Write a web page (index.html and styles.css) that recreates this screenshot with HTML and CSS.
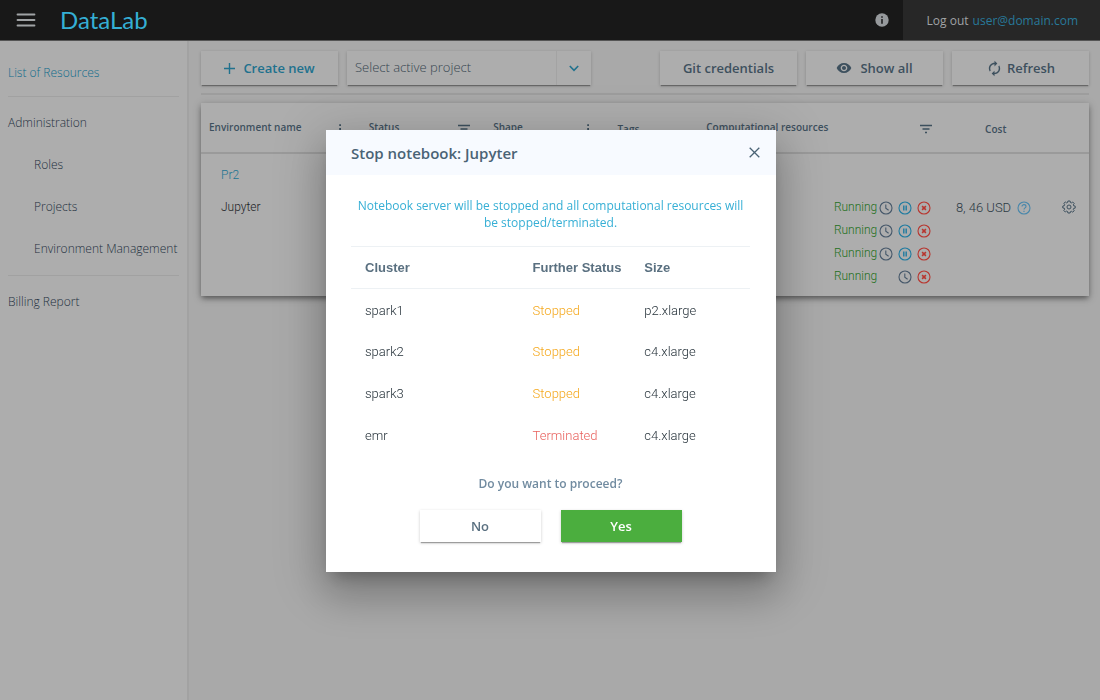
FILE: index.html
```html
<!DOCTYPE html>
<html lang="en">
<head>
<meta charset="utf-8">
<title>DataLab</title>
<link rel="stylesheet" href="styles.css">
</head>
<body>
<svg class="sprite" aria-hidden="true">
  <symbol id="filter" viewBox="0 0 14 14"><path d="M1 3.5h12M3.5 7h7M6 10.5h2" stroke="currentColor" stroke-width="1.3"/></symbol>
  <symbol id="dots" viewBox="0 0 14 14"><path d="M6.2 2.2h1.8v1.8h-1.8zM6.2 6.1h1.8v1.8h-1.8zM6.2 10h1.8v1.8h-1.8z" fill="currentColor"/></symbol>
  <symbol id="clock" viewBox="0 0 14 14"><g fill="none" stroke="currentColor" stroke-width="1.1"><circle cx="7" cy="7" r="6"/><path d="M6.8 3.4v3.9l2.8 1.9"/></g></symbol>
  <symbol id="pause" viewBox="0 0 14 14"><circle cx="7" cy="7" r="6" fill="none" stroke="currentColor" stroke-width="1.1"/><path d="M5.8 4.4v5.2M8.2 4.4v5.2" stroke="currentColor" stroke-width="1.4"/></symbol>
  <symbol id="cancel" viewBox="0 0 14 14"><circle cx="7" cy="7" r="6" fill="none" stroke="currentColor" stroke-width="1.1"/><path d="M5.1 5.1l3.8 3.8M8.9 5.1L5.1 8.9" stroke="currentColor" stroke-width="1.5"/></symbol>
</svg>

<header class="topbar">
  <button class="icon-button menu" aria-label="Menu"><svg width="20" height="14" viewBox="0 0 20 14"><path d="M1.500 1.500h17M1.500 7h17M1.500 12.500h17" stroke="currentColor" stroke-width="1.8" stroke-linecap="round"/></svg></button>
  <a class="logo" href="#">DataLab</a>
  <button class="icon-button info" aria-label="Information"><svg width="14" height="14" viewBox="0 0 14 14"><circle cx="7" cy="7" r="6.700" fill="currentColor"/><path d="M7 3.200v1.500M7 6v4.700" stroke="#181818" stroke-width="1.5"/></svg></button>
  <a class="logout" href="#">Log out <span class="user">user@domain.com</span></a>
</header>

<div class="layout">
  <nav class="sidebar">
    <a class="nav-link active" href="#">List of Resources</a>
    <div class="nav-group">
      <a class="nav-link" href="#">Administration</a>
      <a class="nav-link sub" href="#">Roles</a>
      <a class="nav-link sub" href="#">Projects</a>
      <a class="nav-link sub" href="#">Environment Management</a>
    </div>
    <a class="nav-link" href="#">Billing Report</a>
  </nav>

  <main class="content">
    <div class="toolbar">
      <button class="tool primary"><svg width="11" height="11" viewBox="0 0 11 11"><path d="M5.500 0v11M0 5.500h11" stroke="currentColor" stroke-width="1.4"/></svg>Create new</button>
      <div class="project">
        <select class="project-select" aria-label="Active project"><option>Select active project</option></select>
        <span class="project-arrow"><svg width="10" height="7" viewBox="0 0 10 7"><path d="M.8 1L5 5.300 9.200 1" fill="none" stroke="currentColor" stroke-width="1.6"/></svg></span>
      </div>
      <div class="tool-group">
        <button class="tool">Git credentials</button>
        <button class="tool"><svg width="16" height="16" viewBox="0 0 24 24"><path fill="currentColor" d="M12 4.500C7 4.500 2.730 7.610 1 12c1.730 4.390 6 7.500 11 7.500s9.270-3.110 11-7.500c-1.730-4.390-6-7.500-11-7.500zM12 17c-2.760 0-5-2.240-5-5s2.240-5 5-5 5 2.240 5 5-2.240 5-5 5zm0-8c-1.660 0-3 1.340-3 3s1.340 3 3 3 3-1.340 3-3-1.340-3-3-3z"/></svg>Show all</button>
        <button class="tool tight"><svg width="17" height="17" viewBox="0 0 24 24"><path fill="currentColor" d="M12 6v3l4-4-4-4v3c-4.420 0-8 3.580-8 8 0 1.570.46 3.030 1.240 4.260L6.700 14.800c-.45-.83-.7-1.790-.7-2.800 0-3.310 2.690-6 6-6zm6.760 1.740L17.300 9.200c.44.84.7 1.790.7 2.800 0 3.310-2.690 6-6 6v-3l-4 4 4 4v-3c4.420 0 8-3.580 8-8 0-1.570-.46-3.030-1.240-4.260z"/></svg>Refresh</button>
      </div>
    </div>

    <table class="resources">
      <colgroup><col class="c-name"><col class="c-mid"><col class="c-mid"><col class="c-tags"><col class="c-comp"><col class="c-cost"><col class="c-act"></colgroup>
      <thead>
        <tr>
          <th><div class="head">Environment name<svg class="glyph"><use href="#dots"/></svg></div></th>
          <th><div class="head">Status<svg class="glyph"><use href="#filter"/></svg></div></th>
          <th><div class="head">Shape<svg class="glyph"><use href="#dots"/></svg></div></th>
          <th>Tags</th>
          <th><div class="head">Computational resources<svg class="glyph"><use href="#filter"/></svg></div></th>
          <th class="center">Cost</th>
          <th></th>
        </tr>
      </thead>
      <tbody>
        <tr class="project-row"><td class="indent" colspan="7">Pr2</td></tr>
        <tr class="env-row">
          <td class="indent">Jupyter</td>
          <td></td><td></td><td></td>
          <td>
            <ul class="clusters">
              <li><span>Running</span><svg class="glyph clock"><use href="#clock"/></svg><svg class="glyph pause"><use href="#pause"/></svg><svg class="glyph cancel"><use href="#cancel"/></svg></li>
              <li><span>Running</span><svg class="glyph clock"><use href="#clock"/></svg><svg class="glyph pause"><use href="#pause"/></svg><svg class="glyph cancel"><use href="#cancel"/></svg></li>
              <li><span>Running</span><svg class="glyph clock"><use href="#clock"/></svg><svg class="glyph pause"><use href="#pause"/></svg><svg class="glyph cancel"><use href="#cancel"/></svg></li>
              <li><span>Running</span><i></i><svg class="glyph clock"><use href="#clock"/></svg><svg class="glyph cancel"><use href="#cancel"/></svg></li>
            </ul>
          </td>
          <td><div class="cost">8, 46 USD<button class="icon-button help" aria-label="Cost details"><svg class="glyph" viewBox="0 0 14 14"><g fill="none" stroke="currentColor" stroke-width="1.1"><circle cx="7" cy="7" r="6"/><path d="M5 5.500C5 3 9 3 9 5.500 9 7 7 6.800 7 8.500M7 9.700v1.200"/></g></svg></button></div></td>
          <td><div class="actions"><button class="icon-button gear" aria-label="Actions"><svg class="glyph" viewBox="0 0 14 14"><g fill="none" stroke="currentColor"><path stroke-linejoin="round" d="M5.900 1h2.200l.3 1.500 1 .4 1.300-.9 1.500 1.500-.9 1.300.4 1 1.500.3v2l-1.500.3-.4 1 .9 1.300-1.500 1.500-1.300-.9-1 .4L8.100 13H5.900l-.3-1.500-1-.4-1.300.9-1.500-1.500.9-1.300-.4-1L.8 8V6l1.500-.3.4-1-.9-1.300L3.300 2l1.300.9 1-.4z"/><circle cx="7" cy="7" r="2"/></g></svg></button></div></td>
        </tr>
      </tbody>
    </table>
  </main>
</div>

<div class="overlay">
  <section class="dialog" role="dialog" aria-modal="true" aria-labelledby="dialog-title">
    <header class="dialog-head">
      <h2 class="dialog-title" id="dialog-title">Stop notebook: Jupyter</h2>
      <button class="icon-button close" aria-label="Close"><svg width="11" height="11" viewBox="0 0 11 11"><path d="M.7.7l9.600 9.600M10.300.7L.7 10.300" stroke="currentColor" stroke-width="1.3"/></svg></button>
    </header>
    <div class="dialog-body">
      <p class="message">Notebook server will be stopped and all computational resources will be stopped/terminated.</p>
      <table class="summary">
        <colgroup><col class="s-cluster"><col class="s-status"><col class="s-size"></colgroup>
        <thead><tr><th>Cluster</th><th>Further Status</th><th>Size</th></tr></thead>
        <tbody>
          <tr><td>spark1</td><td class="stopped">Stopped</td><td>p2.xlarge</td></tr>
          <tr><td>spark2</td><td class="stopped">Stopped</td><td>c4.xlarge</td></tr>
          <tr><td>spark3</td><td class="stopped">Stopped</td><td>c4.xlarge</td></tr>
          <tr><td>emr</td><td class="terminated">Terminated</td><td>c4.xlarge</td></tr>
        </tbody>
      </table>
      <p class="question">Do you want to proceed?</p>
      <div class="choices">
        <button class="choice">No</button>
        <button class="choice confirm">Yes</button>
      </div>
    </div>
  </section>
</div>
</body>
</html>
```
FILE: styles.css
```css
* { box-sizing: border-box; }

body {
  margin: 0;
  min-height: 100vh;
  display: flex;
  flex-direction: column;
  background: #a9a9a9;
  color: #3f4f5a;
  font-family: "Open Sans", sans-serif;
  font-size: 13px;
}

a { color: inherit; text-decoration: none; }
button { font: inherit; color: inherit; border: 0; cursor: pointer; }
.sprite { position: absolute; width: 0; height: 0; }
.glyph { width: 14px; height: 14px; display: block; flex: none; }
.icon-button { background: none; padding: 0; display: flex; }

/* Top bar */
.topbar {
  display: flex;
  align-items: center;
  height: 41px;
  background: #181818;
  border-bottom: 1px solid #555;
  color: #a0a3a5;
}
.menu { margin-left: 16px; }
.logo {
  margin-left: 24px;
  font-family: Lato, sans-serif;
  font-size: 24px;
  line-height: 30px;
  color: #35afd5;
}
.info { margin-left: auto; margin-right: 14px; color: #96999c; }
.logout {
  align-self: stretch;
  display: flex;
  align-items: center;
  gap: 4px;
  padding: 0 22px 0 24px;
  background: #272727;
  font-size: 12px;
}
.user { color: #27799a; }

/* Page frame */
.layout { flex: 1; display: flex; }
.sidebar {
  flex: 0 0 189px;
  padding: 11px 8px 0;
  background: #adadad;
  border-right: 2px solid #a2a2a2;
  font-size: 12px;
}
.nav-link { display: block; line-height: 42px; font-weight: 300; color: #1f3040; white-space: nowrap; }
.nav-link.active { color: #0f6c8c; }
.nav-link.sub { padding-left: 26px; }
.nav-group {
  margin: 2px 0 5px;
  padding: 5px 0;
  border: solid #a1a1a1;
  border-width: 1px 0;
}
.content { flex: 1; min-width: 0; padding: 10px 11px 0 12px; }

/* Toolbar */
.toolbar {
  display: flex;
  gap: 9px;
  padding-bottom: 8px;
  margin-bottom: 8px;
  border-bottom: 2px solid #9d9d9d;
}
.tool-group { display: flex; gap: 9px; margin-left: auto; }
.tool {
  display: flex;
  align-items: center;
  justify-content: center;
  gap: 8px;
  width: 137px;
  height: 34px;
  padding: 0;
  background: #adadad;
  font-weight: 600;
  color: #3d505e;
  box-shadow: 0 2px 1px -1px rgba(0, 0, 0, .3), 0 1px 3px rgba(0, 0, 0, .2);
}
.tool.primary { color: #20718d; }
.tool.tight { gap: 4px; }
.project {
  position: relative;
  width: 244px;
  height: 34px;
  background: #adadad;
  box-shadow: 0 2px 1px -1px rgba(0, 0, 0, .3), 0 1px 3px rgba(0, 0, 0, .2);
}
.project-select {
  appearance: none;
  width: 100%;
  height: 32px;
  padding: 0 40px 0 8px;
  border: 0;
  background: none;
  font: inherit;
  font-weight: 300;
  color: #364550;
}
.project-arrow {
  position: absolute;
  inset: 0 0 0 auto;
  width: 35px;
  display: flex;
  align-items: center;
  justify-content: center;
  border-left: 1px solid #a3a3a3;
  color: #20718d;
  pointer-events: none;
}

/* Resource table */
.resources {
  width: 100%;
  table-layout: fixed;
  border-collapse: collapse;
  background: #adadad;
  box-shadow: 0 3px 5px -1px rgba(0, 0, 0, .35), 0 2px 8px rgba(0, 0, 0, .25);
  font-family: Roboto, sans-serif;
  font-size: 12px;
  font-weight: 300;
}
.c-name { width: 18%; }
.c-mid { width: 14%; }
.c-tags { width: 10%; }
.c-comp { width: 28%; }
.c-cost { width: 11%; }
.resources th {
  height: 50px;
  padding: 2px 0 0 8px;
  border-bottom: 2px solid #9a9a9a;
  font-family: "Open Sans", sans-serif;
  font-size: 10px;
  font-weight: 600;
  color: #3d505e;
  text-align: left;
  white-space: nowrap;
}
.resources .center { text-align: center; padding-left: 0; }
.head {
  display: flex;
  align-items: center;
  justify-content: space-between;
  padding: 0 14px 4px 0;
}
.head .glyph { margin-bottom: -4px; }
.resources td { padding: 0; vertical-align: top; line-height: 23px; white-space: nowrap; }
.resources .indent { padding-left: 20px; }
.resources .project-row td { padding-top: 10px; height: 43px; color: #1c7592; }
.env-row { color: #1c2226; }
.clusters {
  margin: 0;
  padding: 0 13px 8px 0;
  list-style: none;
  color: #1f7020;
}
.clusters li {
  display: grid;
  grid-template-columns: 43px 19px 19px 19px;
  justify-content: end;
  align-items: center;
  height: 23px;
}
.clusters .glyph { justify-self: center; }
.clock { color: #46586a; }
.pause { color: #1f7ba0; }
.cancel { color: #b8362f; }
.cost { display: flex; align-items: center; gap: 6px; padding-left: 9px; font-size: 13px; color: #2c3a44; }
.help { color: #4887ab; }
.actions { display: flex; justify-content: flex-end; align-items: center; height: 22px; padding-right: 13px; }
.gear { color: #3d505e; }

/* Confirmation dialog */
.overlay {
  position: fixed;
  inset: 0;
  display: flex;
  align-items: center;
  justify-content: center;
  padding: 2px 0 0 2px;
}
.dialog {
  width: 450px;
  background: #fff;
  box-shadow: 0 11px 15px -7px rgba(0, 0, 0, .25), 0 24px 38px 3px rgba(0, 0, 0, .17), 0 9px 46px 8px rgba(0, 0, 0, .15);
}
.dialog-head {
  display: flex;
  align-items: center;
  justify-content: space-between;
  height: 45px;
  padding: 0 16px 0 25px;
  background: #f7faff;
  color: #4a6375;
}
.dialog-title { margin: 0; font-size: 15px; font-weight: 600; }
.dialog-body { padding: 22px 26px 30px 25px; }
.message {
  margin: 0 0 15px;
  font-size: 12px;
  line-height: 17px;
  text-align: center;
  color: #36afd5;
}
.summary {
  width: 100%;
  table-layout: fixed;
  border-collapse: collapse;
  font-family: Roboto, sans-serif;
  font-weight: 300;
  color: #26323a;
}
.s-cluster { width: 42%; }
.s-status { width: 28%; }
.summary th,
.summary td { height: 42px; padding: 0 0 0 14px; text-align: left; }
.summary th {
  border: solid #edf1f4;
  border-width: 1px 0;
  font-family: "Liberation Sans", sans-serif;
  font-weight: 700;
  color: #5a7080;
}
.summary .stopped { color: #f5a81c; }
.summary .terminated { color: #e8615d; }
.question {
  margin: 17px 0 16px;
  line-height: 20px;
  text-align: center;
  font-size: 12px;
  font-weight: 600;
  color: #718ba0;
}
.choices { display: flex; justify-content: center; gap: 20px; }
.choice {
  width: 121px;
  height: 32px;
  background: #fff;
  font-weight: 600;
  color: #5a7080;
  box-shadow: 0 2px 1px -1px rgba(0, 0, 0, .3), 0 1px 3px rgba(0, 0, 0, .2);
}
.choice.confirm { background: #4bae3e; color: #fff; }
```
